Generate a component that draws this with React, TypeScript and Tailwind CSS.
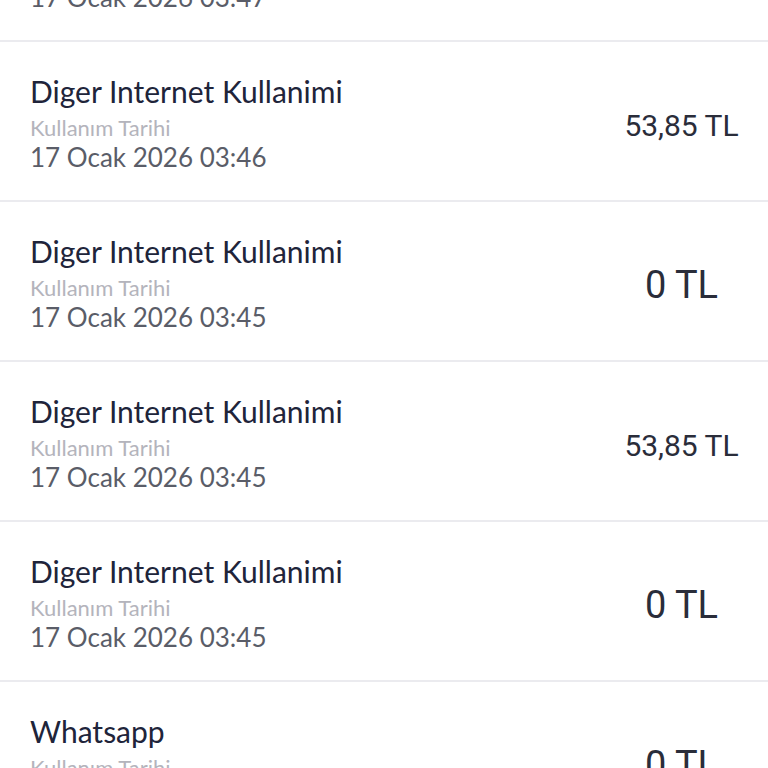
type Usage = {
  title: string;
  date: string;
  amount: string;
};

const usages: Usage[] = [
  { title: 'Diger Internet Kullanimi', date: '17 Ocak 2026 03:47', amount: '53,85 TL' },
  { title: 'Diger Internet Kullanimi', date: '17 Ocak 2026 03:46', amount: '53,85 TL' },
  { title: 'Diger Internet Kullanimi', date: '17 Ocak 2026 03:45', amount: '0 TL' },
  { title: 'Diger Internet Kullanimi', date: '17 Ocak 2026 03:45', amount: '53,85 TL' },
  { title: 'Diger Internet Kullanimi', date: '17 Ocak 2026 03:45', amount: '0 TL' },
  { title: 'Whatsapp', date: '17 Ocak 2026 03:45', amount: '0 TL' },
];

function UsageRow({ u }: { u: Usage }) {
  const big = u.amount === '0 TL';
  return (
    <div className="flex h-[160px] items-center justify-between border-b-2 border-[#ebebef] pl-[30px] pr-[30px]">
      <div className="flex flex-col font-['Lato',sans-serif]">
        <span className="text-[30px] leading-[38px] text-[#20243a]">{u.title}</span>
        <span className="mt-[3px] text-[22px] leading-[30px] text-[#b4b4bc]">Kullanım Tarihi</span>
        <span className="text-[26px] leading-[28px] text-[#5a5d68]">{u.date}</span>
      </div>
      <div className="mt-[8px] flex w-[113px] shrink-0 justify-center whitespace-nowrap font-['Roboto',sans-serif] text-[#2a2d3a]">
        <span className={big ? 'text-[38px]' : 'text-[30px]'}>{u.amount}</span>
      </div>
    </div>
  );
}

export default function App() {
  return (
    <div className="h-[768px] w-[768px] overflow-hidden bg-white">
      <div className="-mt-[118px]">
        {usages.map((u, i) => (
          <UsageRow key={i} u={u} />
        ))}
      </div>
    </div>
  );
}
